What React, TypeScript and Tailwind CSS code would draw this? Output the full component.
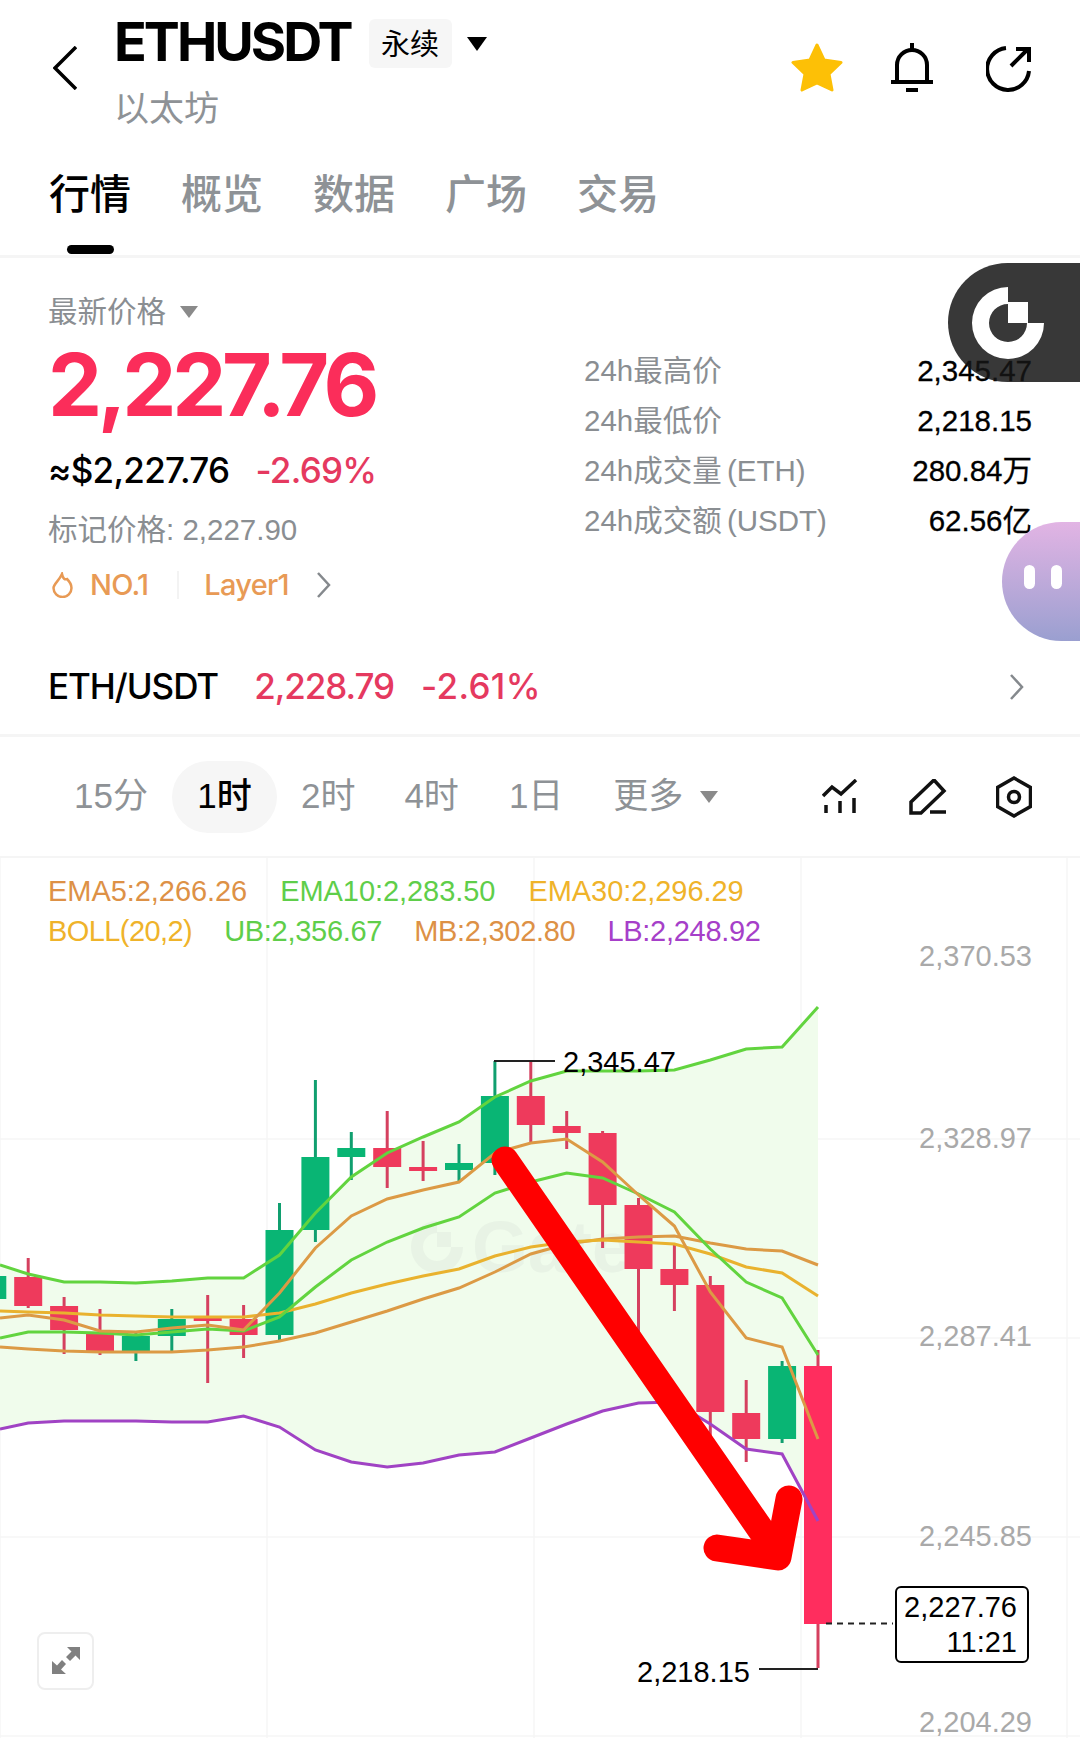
import React from 'react';

type Candle = { i: number; up: boolean; top: number; bottom: number; high: number; low: number };

const candles: Candle[] = [
  { i: -1, up: true, top: 1276, bottom: 1299, high: 1276, low: 1299 },
  { i: 0, up: false, top: 1277, bottom: 1306, high: 1258, low: 1308 },
  { i: 1, up: false, top: 1306, bottom: 1330, high: 1297, low: 1354 },
  { i: 2, up: false, top: 1332, bottom: 1351, high: 1309, low: 1355 },
  { i: 3, up: true, top: 1336, bottom: 1351, high: 1333, low: 1361 },
  { i: 4, up: true, top: 1319, bottom: 1336, high: 1309, low: 1353 },
  { i: 5, up: false, top: 1318, bottom: 1321, high: 1295, low: 1383 },
  { i: 6, up: false, top: 1319, bottom: 1335, high: 1305, low: 1358 },
  { i: 7, up: true, top: 1230, bottom: 1335, high: 1203, low: 1340 },
  { i: 8, up: true, top: 1157, bottom: 1230, high: 1080, low: 1242 },
  { i: 9, up: true, top: 1148, bottom: 1157, high: 1132, low: 1180 },
  { i: 10, up: false, top: 1148, bottom: 1167, high: 1111, low: 1188 },
  { i: 11, up: false, top: 1167, bottom: 1171, high: 1141, low: 1181 },
  { i: 12, up: true, top: 1163, bottom: 1170, high: 1144, low: 1182 },
  { i: 13, up: true, top: 1096, bottom: 1163, high: 1061, low: 1175 },
  { i: 14, up: false, top: 1096, bottom: 1125, high: 1061, low: 1143 },
  { i: 15, up: false, top: 1126, bottom: 1133, high: 1111, low: 1149 },
  { i: 16, up: false, top: 1133, bottom: 1205, high: 1131, low: 1248 },
  { i: 17, up: false, top: 1205, bottom: 1269, high: 1198, low: 1340 },
  { i: 18, up: false, top: 1269, bottom: 1285, high: 1245, low: 1311 },
  { i: 19, up: false, top: 1285, bottom: 1412, high: 1276, low: 1440 },
  { i: 20, up: false, top: 1413, bottom: 1439, high: 1380, low: 1462 },
  { i: 21, up: true, top: 1366, bottom: 1439, high: 1361, low: 1443 },
];

const ub = [1265, 1274, 1282, 1282, 1283, 1281, 1278, 1278, 1255, 1213, 1177, 1153, 1137, 1122, 1097, 1081, 1071, 1071, 1071, 1070, 1060, 1049, 1047, 1007];
const ema10 = [1338, 1332, 1332, 1333, 1335, 1332, 1329, 1331, 1317, 1287, 1260, 1242, 1228, 1217, 1193, 1182, 1173, 1178, 1194, 1212, 1249, 1282, 1298, 1355];
const ema5 = [1318, 1315, 1320, 1331, 1332, 1328, 1325, 1330, 1293, 1248, 1216, 1199, 1190, 1182, 1153, 1143, 1139, 1162, 1195, 1226, 1292, 1338, 1347, 1439];
const ema30 = [1311, 1312, 1313, 1315, 1316, 1317, 1317, 1317, 1313, 1304, 1293, 1284, 1276, 1269, 1256, 1247, 1242, 1240, 1242, 1244, 1254, 1267, 1273, 1296];
const mb = [1347, 1349, 1351, 1352, 1352, 1352, 1350, 1347, 1341, 1333, 1322, 1311, 1299, 1288, 1272, 1254, 1244, 1239, 1237, 1236, 1243, 1249, 1251, 1265];
const lb = [1429, 1423, 1421, 1421, 1421, 1422, 1422, 1416, 1427, 1450, 1462, 1467, 1463, 1455, 1452, 1438, 1424, 1411, 1403, 1402, 1424, 1449, 1454, 1521];

const xAt = (i: number) => 28.2 + 35.9 * i;
// first sample sits on the left edge of the chart
const pts = (ys: number[]) => ys.map((y, n) => `${n === 0 ? 0 : xAt(n - 1).toFixed(1)},${y}`);

function Chart() {
  const band = [...pts(ub), ...pts(lb).reverse()].join(' ');
  return (
    <svg className="absolute inset-0 w-full h-full" viewBox="0 858 1080 880">
      {[0, 267, 534, 801, 1067].map((x) => (
        <line key={x} x1={x} x2={x} y1={858} y2={1738} stroke="#f6f6f6" strokeWidth="1.5" />
      ))}
      {[1139, 1338, 1537, 1736].map((y) => (
        <line key={y} x1={0} x2={1080} y1={y} y2={y} stroke="#f6f6f6" strokeWidth="1.5" />
      ))}
      <polygon points={band} fill="#f0fcec" />
      <g opacity="0.6">
        <path transform="translate(437 1247)" fill="#e3eee1" d="M0 -26A26 26 0 1 0 26 0H14A14 14 0 1 1 0 -14Z" />
        <rect x="437" y="1232" width="14" height="15" fill="#e3eee1" />
        <text x="472" y="1272" fontSize="72" fontWeight="700" fill="#e3eee1" fontFamily="Liberation Sans">Gate</text>
      </g>
      {candles.map((c) => {
        const x = xAt(c.i);
        return (
          <g key={c.i}>
            <line x1={x} x2={x} y1={c.high} y2={c.low} stroke={c.up ? '#109f6f' : '#d5405f'} strokeWidth="3" />
            <rect x={x - 14} y={c.top} width="28" height={c.bottom - c.top} fill={c.up ? '#09b574' : '#ee3a5c'} />
          </g>
        );
      })}
      <line x1={xAt(22)} x2={xAt(22)} y1={1350} y2={1668} stroke="#d5405f" strokeWidth="3" />
      <rect x={xAt(22) - 14} y={1366} width="28" height={258} fill="#ff2d5e" />
      <polyline points={pts(ub).join(' ')} fill="none" stroke="#62d43f" strokeWidth="3" />
      <polyline points={pts(lb).join(' ')} fill="none" stroke="#a043c4" strokeWidth="3" />
      <polyline points={pts(mb).join(' ')} fill="none" stroke="#dc9a45" strokeWidth="3" />
      <polyline points={pts(ema30).join(' ')} fill="none" stroke="#e9b22e" strokeWidth="3" />
      <polyline points={pts(ema10).join(' ')} fill="none" stroke="#62d43f" strokeWidth="3" />
      <polyline points={pts(ema5).join(' ')} fill="none" stroke="#dc9a45" strokeWidth="3" />
      <line x1={494} x2={555} y1={1061} y2={1061} stroke="#222" strokeWidth="2" />
      <line x1={759} x2={818} y1={1669} y2={1669} stroke="#222" strokeWidth="2" />
      <line x1={826} x2={893} y1={1623.5} y2={1623.5} stroke="#222" strokeWidth="2" strokeDasharray="6 5" />
      <g fill="none" stroke="#ff0000" strokeWidth="27" strokeLinecap="round" strokeLinejoin="round">
        <path d="M505 1160L772 1546" />
        <path d="M717 1548L778 1557L789 1499" />
      </g>
    </svg>
  );
}

export default function App() {
  return (
    <div className="relative w-[1080px] h-[1738px] overflow-hidden bg-white text-black font-['Liberation_Sans','Noto_Sans_CJK_SC',sans-serif]">
      {/* header */}
      <div className="flex items-start h-[150px] pl-[53px] pr-[48px] pt-[19px]">
        <svg className="mt-[27px]" width="24" height="44" viewBox="0 0 24 44" fill="none" stroke="#000" strokeWidth="3.5">
          <path d="M23 1L2 22L23 43" />
        </svg>
        <div className="ml-[37px]">
          <div className="flex items-center h-[49px]">
            <span className="relative top-[-2px] text-[54px] leading-[49px] font-bold tracking-[-0.055em] font-['Inter','Noto_Sans_CJK_SC',sans-serif]">ETHUSDT</span>
            <span className="ml-[18px] flex items-center justify-center w-[83px] h-[49px] pt-[4px] rounded-md bg-[#f6f6f6] text-[29px]">永续</span>
            <span className="ml-[15px] w-0 h-0 border-x-[10px] border-x-transparent border-t-[14px] border-t-black" />
          </div>
          <div className="mt-[22px] text-[35px] leading-[38px] text-[#8e9296]">以太坊</div>
        </div>
        <div className="ml-auto mt-[24px] flex items-start">
          <svg width="52" height="50" viewBox="0 0 52 50">
            <path d="M26 2L33 17L50 19.5L38 31L41 47L26 40L11 47L14 31L2 19.5L19 17Z" fill="#fdc006" stroke="#fdc006" strokeWidth="3" strokeLinejoin="round" />
          </svg>
          <svg className="ml-[48px]" width="44" height="50" viewBox="891 43 44 50" fill="none" stroke="#000" strokeWidth="4">
            <path d="M897 82V65A15 15 0 0 1 927 65V82" />
            <path d="M891 82H933M912 43V50M906 90H918" />
          </svg>
          <svg className="ml-[51px]" width="46" height="50" viewBox="986 43 46 50" fill="none" stroke="#000" strokeWidth="4">
            <path d="M1006 48A21 21 0 1 0 1029 71" />
            <path d="M1011 66L1027 50M1016 49H1029V62" />
          </svg>
        </div>
      </div>

      {/* tabs */}
      <div className="flex gap-[50px] h-[105px] pl-[49px] pt-[23px] text-[41px] leading-[44px] font-medium text-[#8e9296]">
        {['行情', '概览', '数据', '广场', '交易'].map((t, n) => (
          <div key={t} className="flex flex-col items-center">
            <span className={n === 0 ? 'text-black' : ''}>{t}</span>
            {n === 0 && <span className="mt-[28px] w-[47px] h-[9px] rounded-full bg-black" />}
          </div>
        ))}
      </div>
      <div className="h-[3px] bg-[#f5f5f5]" />

      {/* price + 24h stats */}
      <div className="flex h-[345px]">
        <div className="w-[584px] pl-[48px] pt-[36px]">
          <div className="flex items-center h-[36px] text-[29.5px] text-[#8a8e92]">
            最新价格
            <span className="ml-[14px] w-0 h-0 border-x-[9px] border-x-transparent border-t-[12px] border-t-[#8a8a8a]" />
          </div>
          <div className="mt-[11px] text-[86px] leading-[88px] font-bold tracking-[-0.05em] text-[#fb2d5a] font-['Inter',sans-serif]">2,227.76</div>
          <div className="mt-[19px] flex text-[35px] leading-[44px] font-medium tracking-[-0.02em] font-['Inter',sans-serif]">
            <span>≈$2,227.76</span>
            <span className="ml-[26px] text-[#e5395f]">-2.69%</span>
          </div>
          <div className="mt-[20px] text-[29.5px] leading-[36px] text-[#8a8e92]">标记价格: 2,227.90</div>
          <div className="mt-[19px] flex items-center h-[36px] text-[29px] font-medium tracking-[-0.025em] text-[#e89a55] font-['Inter',sans-serif]">
            <svg className="ml-[4px]" width="21" height="26" viewBox="0 0 21 26" fill="none" stroke="#e89a55" strokeWidth="2.5">
              <path d="M10 2C11 7 13 8 15 7C18 10 19.5 13 19.5 16A9 9 0 0 1 1.5 16C1.5 12 7 9 10 2Z" />
            </svg>
            <span className="ml-[17px]">NO.1</span>
            <span className="ml-[29px] w-[2px] h-[28px] bg-[#f3f3f3]" />
            <span className="ml-[25px]">Layer1</span>
            <svg className="ml-[28px]" width="14" height="26" viewBox="0 0 14 26" fill="none" stroke="#85898d" strokeWidth="2.5">
              <path d="M1 1L12 13L1 25" />
            </svg>
          </div>
        </div>
        <div className="flex-1 pr-[48px] pt-[88px] text-[29.5px] leading-[50px]">
          {[
            ['24h最高价', '2,345.47'],
            ['24h最低价', '2,218.15'],
            ['24h成交量 (ETH)', '280.84万'],
            ['24h成交额 (USDT)', '62.56亿'],
          ].map(([label, value]) => (
            <div key={label} className="flex justify-between">
              <span className="text-[#8a8e92] [word-spacing:-3px]">{label}</span>
              <span className="[-webkit-text-stroke:0.3px_#000]">{value}</span>
            </div>
          ))}
        </div>
      </div>

      {/* pair row */}
      <div className="flex items-start h-[131px] pl-[48px] pr-[56px] pt-[61px] text-[35px] leading-[44px] font-medium tracking-[-0.03em] font-['Inter',sans-serif]">
        <span>ETH/USDT</span>
        <span className="ml-[36px] text-[#e5395f]">2,228.79</span>
        <span className="ml-[27px] text-[#e5395f] tracking-[0.01em]">-2.61%</span>
        <svg className="ml-auto mt-[10px]" width="14" height="26" viewBox="0 0 14 26" fill="none" stroke="#85898d" strokeWidth="2.5">
          <path d="M1 1L12 13L1 25" />
        </svg>
      </div>
      <div className="h-[3px] bg-[#f5f5f5]" />

      {/* timeframes */}
      <div className="flex items-center h-[119px] pl-[74px] pr-[48px] text-[35px] text-[#8e9296]">
        <span>15分</span>
        <span className="ml-[24px] flex items-center justify-center w-[105px] h-[72px] rounded-full bg-[#f6f6f6] text-black font-medium">1时</span>
        <span className="ml-[24px]">2时</span>
        <span className="ml-[49px]">4时</span>
        <span className="ml-[50px]">1日</span>
        <span className="ml-[50px]">更多</span>
        <span className="ml-[17px] w-0 h-0 border-x-[9px] border-x-transparent border-t-[12px] border-t-[#8a8a8a]" />
        <svg className="ml-auto" width="36" height="36" viewBox="822 778 36 36" fill="none" stroke="#111" strokeWidth="3.5">
          <path d="M823 795L832 786L841 793L856 779M826 804V812M840 800V812M854 797V812" />
        </svg>
        <svg className="ml-[51px]" width="38" height="36" viewBox="908 777 38 36" fill="none" stroke="#111" strokeWidth="3.5">
          <path d="M910 800L933 778L943 789L920 811H910ZM929 810H945" />
        </svg>
        <svg className="ml-[49px]" width="36" height="42" viewBox="996 776 36 42" fill="none" stroke="#111" strokeWidth="3.5">
          <path d="M1014 778L1030.5 787.5V806.5L1014 816L997.5 806.5V787.5Z" />
          <circle cx="1014" cy="797" r="5.5" />
        </svg>
      </div>
      <div className="h-[2px] bg-[#f5f5f5]" />

      {/* chart */}
      <div className="relative h-[880px]">
        <Chart />
        <div className="relative pl-[48px] pt-[13px] text-[29px] leading-[40px]">
          <div className="flex gap-[33px] tracking-[-0.002em]">
            <span className="text-[#dd9146]">EMA5:2,266.26</span>
            <span className="text-[#5fce4a]">EMA10:2,283.50</span>
            <span className="text-[#efb32a]">EMA30:2,296.29</span>
          </div>
          <div className="flex gap-[32px] tracking-[-0.01em]">
            <span className="text-[#efb32a] tracking-[-0.02em]">BOLL(20,2)</span>
            <span className="text-[#5fce4a]">UB:2,356.67</span>
            <span className="text-[#dd9146]">MB:2,302.80</span>
            <span className="text-[#a63fc9]">LB:2,248.92</span>
          </div>
        </div>

        {/* axis labels and chart marks */}
        {[
          ['2,370.53', 'top-[78px]'],
          ['2,328.97', 'top-[260px]'],
          ['2,287.41', 'top-[458px]'],
          ['2,245.85', 'top-[658px]'],
          ['2,204.29', 'top-[844px]'],
        ].map(([v, top]) => (
          <span key={v} className={`absolute right-[48px] text-[29px] leading-[40px] text-[#a9a9a9] ${top}`}>{v}</span>
        ))}
        <span className="absolute left-[563px] top-[184px] text-[29px] leading-[40px]">2,345.47</span>
        <span className="absolute left-[637px] top-[794px] text-[29px] leading-[40px]">2,218.15</span>
        <div className="absolute left-[895px] top-[728px] w-[134px] h-[77px] border-2 border-black rounded-md bg-white pr-[10px] pt-[2px] text-right text-[29px] leading-[35px]">
          <div>2,227.76</div>
          <div>11:21</div>
        </div>
        <div className="absolute left-[37px] top-[774px] flex items-center justify-center w-[57px] h-[58px] rounded-lg border-2 border-[#eeeeee] bg-white">
          <svg width="30" height="30" viewBox="51 1646 30 30" fill="#808080">
            <path d="M67 1647H80V1660L75.5 1655.5L70 1661L66 1657L71.5 1651.5Z" />
            <path d="M52 1661V1674H66L61 1669.5L66 1664L62 1660L57 1665.5Z" />
          </svg>
        </div>
      </div>

      {/* floating widgets */}
      <div className="absolute right-0 top-[263px] flex items-center w-[132px] h-[119px] pl-[23px] rounded-l-[60px] bg-[#151515]/85">
        <svg width="74" height="74" viewBox="-37 -37 74 74" fill="#fff">
          <path d="M0 -36A36 36 0 1 0 36 0H19A19 19 0 1 1 0 -19Z" />
          <rect x="0" y="-21" width="20" height="21" />
        </svg>
      </div>
      <div className="absolute right-0 top-[522px] flex items-center gap-[16px] w-[78px] h-[119px] pl-[22px] pb-[10px] rounded-l-[60px] bg-gradient-to-b from-[#e2b4e4] to-[#9a9fd0]">
        <span className="w-[11px] h-[24px] rounded-full bg-white" />
        <span className="w-[11px] h-[24px] rounded-full bg-white" />
      </div>
    </div>
  );
}
